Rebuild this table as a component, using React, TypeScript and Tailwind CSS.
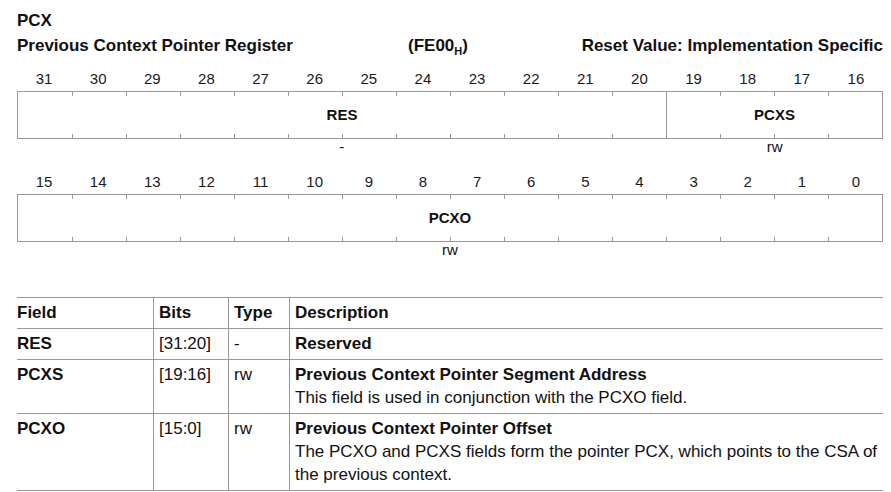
import React from "react";

type Field = { name: string; span: string; access: string; first?: boolean };

const row1: Field[] = [
  { name: "RES", span: "col-span-12", access: "-", first: true },
  { name: "PCXS", span: "col-span-4", access: "rw" },
];
const row2: Field[] = [{ name: "PCXO", span: "col-span-16", access: "rw", first: true }];

function Register({ bits, fields }: { bits: number[]; fields: Field[] }) {
  return (
    <div>
      <div className="grid grid-cols-16 h-[20px] text-[15px] leading-[20px] text-center text-[#1a1a1a]">
        {bits.map((b) => (
          <div key={b}>{b}</div>
        ))}
      </div>
      <div className="relative mt-[2px] grid grid-cols-16 h-[48px] border border-[#999]">
        {fields.map((f) => (
          <div
            key={f.name}
            className={`${f.span} flex items-center justify-center text-[15px] font-bold ${f.first ? "" : "border-l border-[#999]"}`}
          >
            {f.name}
          </div>
        ))}
        <div className="pointer-events-none absolute inset-0 grid grid-cols-16">
          {bits.map((b, i) => (
            <div key={b} className="relative">
              {i > 0 && (
                <>
                  <div className="absolute left-0 top-0 h-[4px] w-px bg-[#999]" />
                  <div className="absolute left-0 bottom-0 h-[4px] w-px bg-[#999]" />
                </>
              )}
            </div>
          ))}
        </div>
      </div>
      <div className="grid grid-cols-16 h-[16px] text-[15px] leading-[16px] text-center">
        {fields.map((f) => (
          <div key={f.name} className={f.span}>
            {f.access}
          </div>
        ))}
      </div>
    </div>
  );
}

type Row = { field: string; bits: string; type: string; title: string; lines?: string[] };

const rows: Row[] = [
  { field: "RES", bits: "[31:20]", type: "-", title: "Reserved" },
  {
    field: "PCXS",
    bits: "[19:16]",
    type: "rw",
    title: "Previous Context Pointer Segment Address",
    lines: ["This field is used in conjunction with the PCXO field."],
  },
  {
    field: "PCXO",
    bits: "[15:0]",
    type: "rw",
    title: "Previous Context Pointer Offset",
    lines: ["The PCXO and PCXS fields form the pointer PCX, which points to the CSA of", "the previous context."],
  },
];

const cell = "pt-[3px] pb-[4px] leading-[23px] border-b border-[#999]";
const cellL = "pl-[5px] border-l border-[#999]";

export default function App() {
  return (
    <div
      className="w-[891px] h-[492px] bg-white text-[#111] px-[8px] overflow-hidden"
      style={{ fontFamily: '"Liberation Sans", Arial, sans-serif' }}
    >
      <div className="ml-[9px] w-[866px] pt-[8px]">
        <div className="text-[17px] font-bold leading-[25px]">PCX</div>
        <div className="grid grid-cols-[391px_auto_1fr] text-[17px] font-bold leading-[25px]">
          <div>Previous Context Pointer Register</div>
          <div>
            (FE00<sub className="text-[11px] align-baseline relative top-[4px]">H</sub>)
          </div>
          <div className="text-right">Reset Value: Implementation Specific</div>
        </div>
        <div className="mt-[11px]">
          <Register bits={[31, 30, 29, 28, 27, 26, 25, 24, 23, 22, 21, 20, 19, 18, 17, 16]} fields={row1} />
        </div>
        <div className="mt-[17px]">
          <Register bits={[15, 14, 13, 12, 11, 10, 9, 8, 7, 6, 5, 4, 3, 2, 1, 0]} fields={row2} />
        </div>
        <div className="mt-[39px] grid grid-cols-[136px_75px_61px_1fr] border-t border-[#999] text-[17px]">
          <div className={`${cell} font-bold`}>Field</div>
          <div className={`${cell} ${cellL} font-bold`}>Bits</div>
          <div className={`${cell} ${cellL} font-bold`}>Type</div>
          <div className={`${cell} ${cellL} font-bold`}>Description</div>
          {rows.map((r) => (
            <React.Fragment key={r.field}>
              <div className={`${cell} font-bold`}>{r.field}</div>
              <div className={`${cell} ${cellL}`}>{r.bits}</div>
              <div className={`${cell} ${cellL}`}>{r.type}</div>
              <div className={`${cell} ${cellL}`}>
                <div className="font-bold">{r.title}</div>
                {r.lines?.map((l) => (
                  <div key={l} className="whitespace-nowrap">
                    {l}
                  </div>
                ))}
              </div>
            </React.Fragment>
          ))}
        </div>
      </div>
    </div>
  );
}
